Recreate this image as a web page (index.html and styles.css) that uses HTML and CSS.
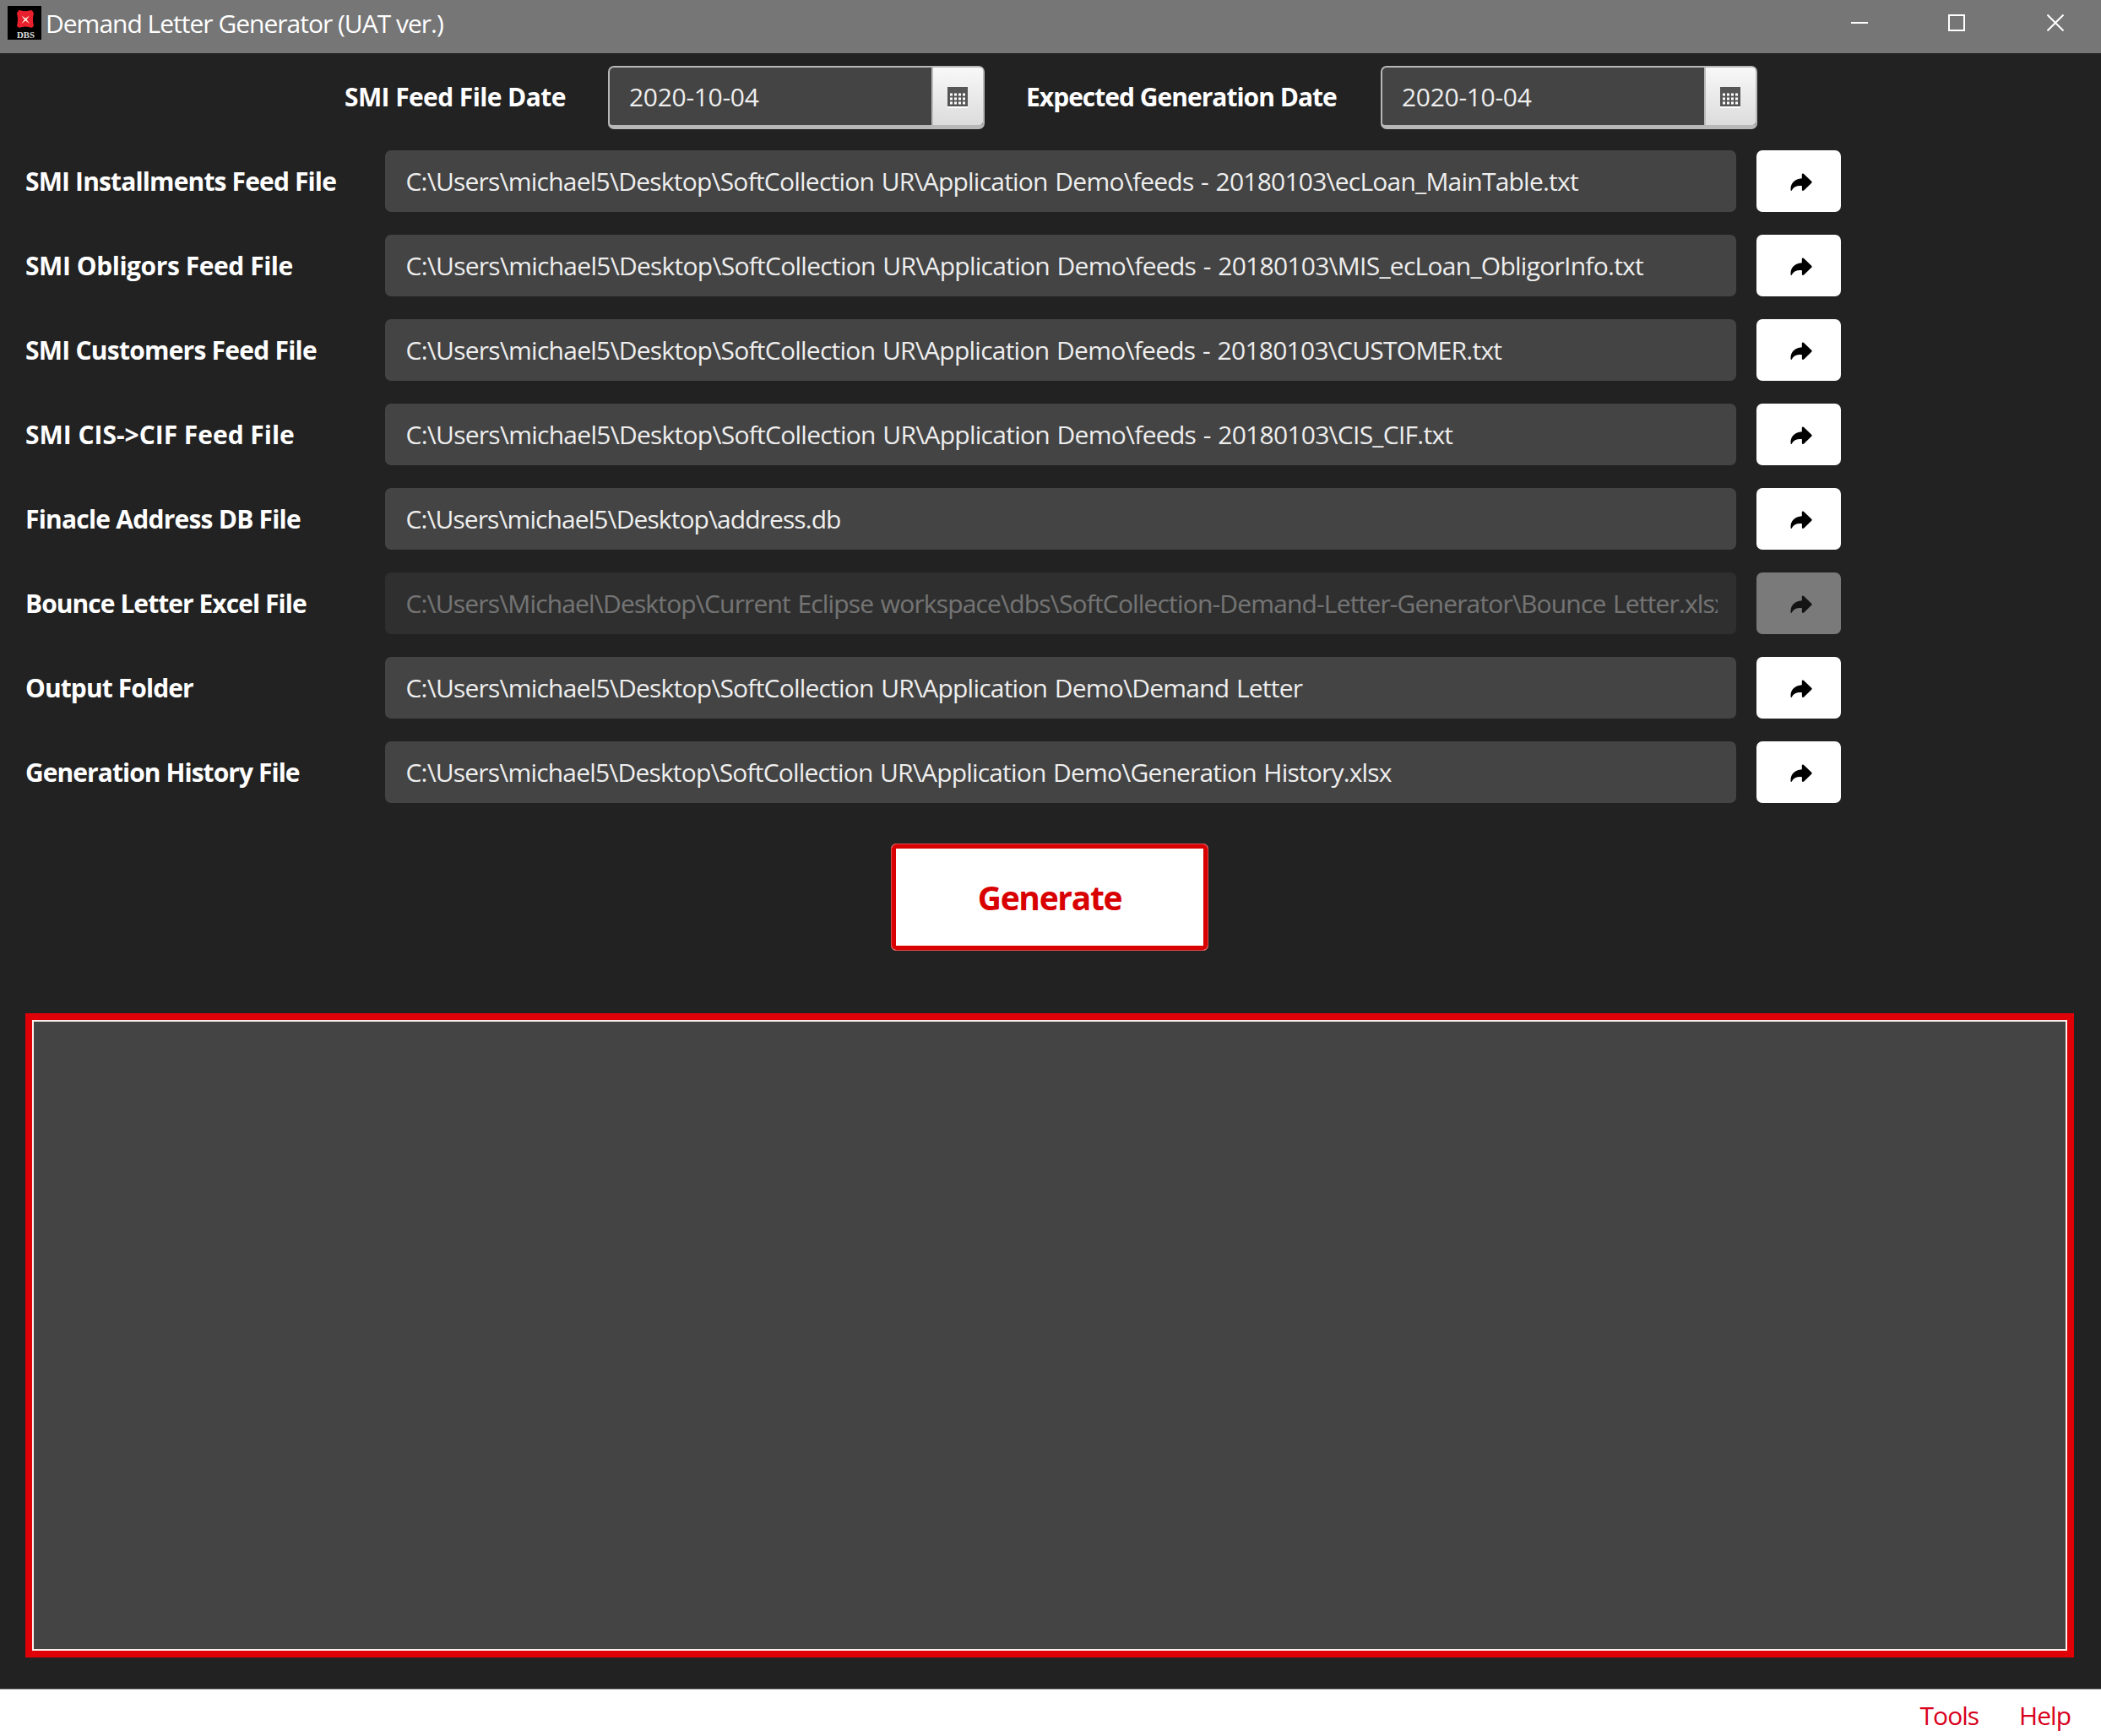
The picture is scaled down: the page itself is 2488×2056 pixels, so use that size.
FILE: index.html
```html
<!DOCTYPE html>
<html lang="en">
<head>
<meta charset="utf-8">
<title>Demand Letter Generator (UAT ver.)</title>
<link rel="stylesheet" href="styles.css">
</head>
<body>
<svg width="0" height="0" class="defs">
  <symbol id="arrow" viewBox="0 0 26 22">
    <path d="M.6 20.6C-.2 12.500 4.500 7 13.800 6.200V1.600Q14 0 15.800.7L25.200 9.700Q26.200 10.700 25.200 11.700L16.200 20.600Q14.300 21.600 13.900 20V15.200C8.500 14.600 4 16.200 1.800 20.500Q1 21.500.6 20.600Z"/>
  </symbol>
  <symbol id="calendar" viewBox="0 0 24 26">
    <path fill="#fff" d="M0 23h24v2H0z"/>
    <path fill="#555" d="M0 0h24v23H0z"/>
    <path stroke="#fff" stroke-width="3" stroke-dasharray="3 2" d="M3 9h18M3 14h18M3 19h18"/>
  </symbol>
</svg>

<header class="titlebar">
  <svg class="logo" viewBox="0 0 40 40">
    <path d="M0 0h40v40H0z"/>
    <path fill="#e8202e" d="M12 7q1-3 4-1.500 5 1.500 10 0 3-1.500 4 1.500l1 2q-2 7 0 14l-1 2q-2 1.500-5 0-4-1-8 0-3 1.500-5 0l-1-2q2-7 0-14z"/>
    <path fill="#ffe9d8" d="M16.500 11.500l4.700 3.300 4.700-3.300-3.300 4.700 3.300 4.700-4.700-3.300-4.700 3.300 3.300-4.700z"/>
    <text x="11" y="38" textLength="21" lengthAdjust="spacingAndGlyphs">DBS</text>
  </svg>
  <h1>Demand Letter Generator (UAT ver.)</h1>
  <div class="window-controls">
    <svg viewBox="0 0 20 20"><path d="M0 10h20"/></svg>
    <svg viewBox="0 0 20 20"><path d="M1 1h18v18H1z"/></svg>
    <svg viewBox="0 0 20 20"><path d="M.5.5l19 19M19.500.5l-19 19"/></svg>
  </div>
</header>

<main>
  <section class="dates">
    <label class="feed-date">SMI Feed File Date</label>
    <div class="datepicker"><span>2020-10-04</span><button><svg><use href="#calendar"/></svg></button></div>
    <label class="expected-date">Expected Generation Date</label>
    <div class="datepicker"><span>2020-10-04</span><button><svg><use href="#calendar"/></svg></button></div>
  </section>

  <section class="files">
    <div class="row installments">
      <label>SMI Installments Feed File</label>
      <div class="field"><span>C:\Users\michael5\Desktop\SoftCollection UR\Application Demo\feeds - 20180103\ecLoan_MainTable.txt</span></div>
      <button><svg><use href="#arrow"/></svg></button>
    </div>
    <div class="row obligors">
      <label>SMI Obligors Feed File</label>
      <div class="field"><span>C:\Users\michael5\Desktop\SoftCollection UR\Application Demo\feeds - 20180103\MIS_ecLoan_ObligorInfo.txt</span></div>
      <button><svg><use href="#arrow"/></svg></button>
    </div>
    <div class="row customers">
      <label>SMI Customers Feed File</label>
      <div class="field"><span>C:\Users\michael5\Desktop\SoftCollection UR\Application Demo\feeds - 20180103\CUSTOMER.txt</span></div>
      <button><svg><use href="#arrow"/></svg></button>
    </div>
    <div class="row cis">
      <label>SMI CIS-&gt;CIF Feed File</label>
      <div class="field"><span>C:\Users\michael5\Desktop\SoftCollection UR\Application Demo\feeds - 20180103\CIS_CIF.txt</span></div>
      <button><svg><use href="#arrow"/></svg></button>
    </div>
    <div class="row address">
      <label>Finacle Address DB File</label>
      <div class="field"><span>C:\Users\michael5\Desktop\address.db</span></div>
      <button><svg><use href="#arrow"/></svg></button>
    </div>
    <div class="row bounce disabled">
      <label>Bounce Letter Excel File</label>
      <div class="field"><span>C:\Users\Michael\Desktop\Current Eclipse workspace\dbs\SoftCollection-Demand-Letter-Generator\Bounce Letter.xlsx</span></div>
      <button disabled><svg><use href="#arrow"/></svg></button>
    </div>
    <div class="row output">
      <label>Output Folder</label>
      <div class="field"><span>C:\Users\michael5\Desktop\SoftCollection UR\Application Demo\Demand Letter</span></div>
      <button><svg><use href="#arrow"/></svg></button>
    </div>
    <div class="row history">
      <label>Generation History File</label>
      <div class="field"><span>C:\Users\michael5\Desktop\SoftCollection UR\Application Demo\Generation History.xlsx</span></div>
      <button><svg><use href="#arrow"/></svg></button>
    </div>
  </section>

  <button class="generate">Generate</button>
  <div class="log"></div>
</main>

<footer><a>Tools</a><a>Help</a></footer>
</body>
</html>
```
FILE: styles.css
```css
* { box-sizing: border-box; }
body {
  margin: 0;
  height: 2056px;
  display: flex;
  flex-direction: column;
  background: #222;
  color: #fff;
  font: 30px "Open Sans", "Noto Sans", sans-serif;
  white-space: nowrap;
  overflow: hidden;
}
.defs { display: none; }
button { border: 0; padding: 0; font: inherit; display: flex; align-items: center; justify-content: center; }

.titlebar { height: 63px; flex: none; background: #767676; display: flex; align-items: flex-start; padding: 7px 44px 0 9px; }
.logo { width: 40px; height: 40px; }
.logo text { font: bold 11px "Liberation Serif", serif; fill: #ddd; }
.titlebar h1 { margin: 0 auto 0 5px; font-size: 30px; font-weight: 400; line-height: 42px; letter-spacing: -1px; }
.window-controls { display: flex; gap: 97px; padding-top: 10px; }
.window-controls svg { width: 20px; height: 20px; fill: none; stroke: #fff; stroke-width: 2; }
.window-controls svg:first-child { margin-right: -2px; }

main { flex: 1; display: flex; flex-direction: column; padding: 15px 32px 0 30px; }
label { font-weight: 700; }

.dates { display: flex; height: 75px; line-height: 74px; padding-left: 378px; }
.feed-date { width: 312px; letter-spacing: -.6px; }
.datepicker {
  width: 446px;
  height: 75px;
  display: flex;
  border: 2px solid #b8b8b8;
  border-bottom-width: 5px;
  border-radius: 7px;
  background: #444;
  color: #eee;
  line-height: 70px;
}
.datepicker span { flex: 1; padding-left: 23px; letter-spacing: -.3px; }
.datepicker button { width: 61px; border-left: 2px solid #bbb; border-radius: 0 4px 4px 0; background: linear-gradient(#f8f8f8, #dcdcdc); }
.datepicker svg { width: 24px; height: 26px; margin: 4px 2px 0 0; }
.expected-date { width: 469px; padding-left: 49px; letter-spacing: -1px; }

.files { display: flex; flex-direction: column; gap: 27px; margin-top: 25px; }
.row { display: grid; grid-template: 73px / 401px 1600px 100px; column-gap: 24.5px; line-height: 74px; }
.field { padding: 0 21.5px 0 25px; border-radius: 7px; background: #444; color: #eee; word-spacing: 1.6px; }
.field span { display: block; height: 73px; overflow: hidden; }
.row button { border-radius: 7px; background: #fff; }
.row svg { width: 26px; height: 22px; margin: 3px 0 0 5px; }
.disabled .field, .disabled button { opacity: .4; }

/* per-row tracking of the label and of the path */
.installments label { letter-spacing: -.86px; }
.installments .field { letter-spacing: -.78px; }
.obligors label { letter-spacing: -.45px; }
.obligors .field { letter-spacing: -.74px; }
.customers label { letter-spacing: -.77px; }
.customers .field { letter-spacing: -.75px; }
.cis label { letter-spacing: -.03px; }
.cis .field { letter-spacing: -.74px; }
.address label { letter-spacing: -.78px; }
.address .field { letter-spacing: -.92px; }
.bounce label { letter-spacing: -.96px; }
.bounce .field { letter-spacing: -.84px; }
.output label { letter-spacing: -.92px; }
.output .field { letter-spacing: -.79px; }
.history label { letter-spacing: -.95px; }
.history .field { letter-spacing: -.82px; }

.generate {
  align-self: center;
  width: 376px;
  height: 127px;
  margin: 48px 0 74px;
  border: 1px solid #e04a4a;
  border-radius: 6px;
  background: #fff;
  box-shadow: inset 0 0 0 5px #d80000;
  color: #d80000;
  font-size: 39px;
  font-weight: 700;
  letter-spacing: -1.33px;
}
.log { height: 763px; border: 8px solid #e00008; background: #444; box-shadow: inset 0 0 0 2px #fbeeea; }

footer {
  flex: none;
  height: 56px;
  display: flex;
  justify-content: flex-end;
  gap: 48px;
  padding: 5px 36px 0 0;
  border-top: 1px solid #999;
  background: #fff;
  color: #d8001c;
  line-height: 52px;
  letter-spacing: -1px;
}
```
